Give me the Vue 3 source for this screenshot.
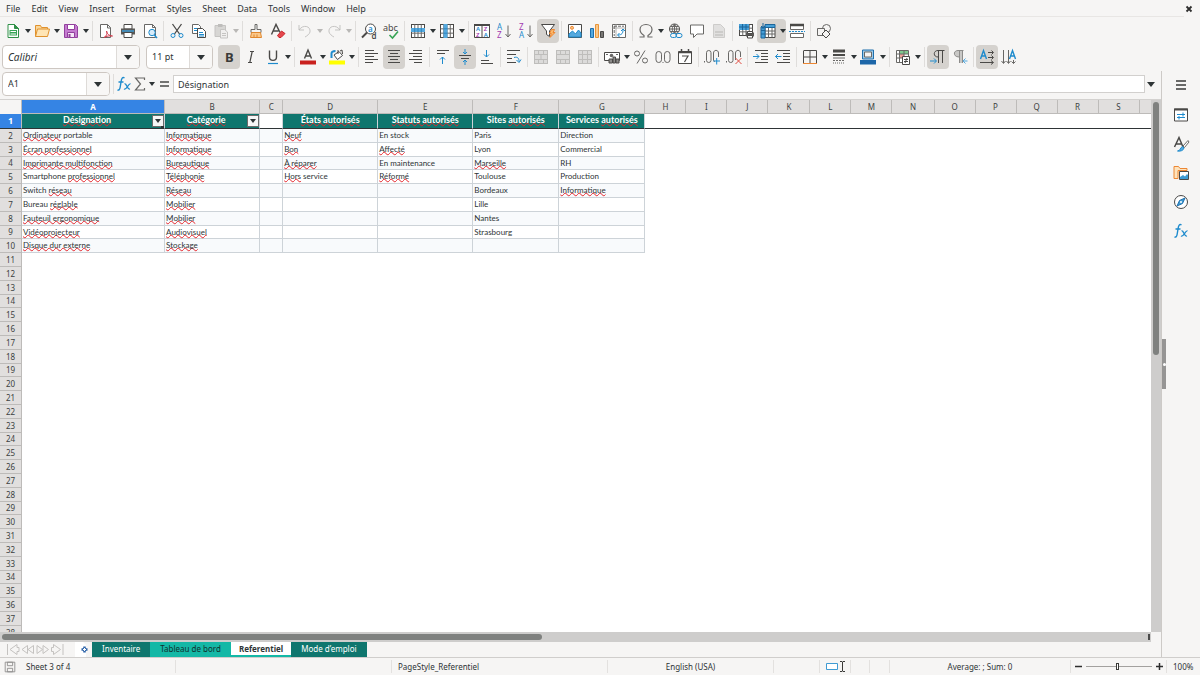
<script setup>
const menus = ['File', 'Edit', 'View', 'Insert', 'Format', 'Styles', 'Sheet', 'Data', 'Tools', 'Window', 'Help']

const G = '#696866'
const D = '#4a4947'
const B = '#1e8bcd'
const grid = (x, y, w, h) =>
  `<rect x="${x}" y="${y}" width="${w}" height="${h}" fill="#fff" stroke="${D}"/><path d="M${x} ${y + h / 3}h${w}M${x} ${y + (2 * h) / 3}h${w}M${x + w / 4} ${y}v${h}M${x + w / 2} ${y}v${h}M${x + (3 * w) / 4} ${y}v${h}" stroke="${G}"/>`
const lines = (rows) => `<path d="${rows.map(([x, y, w]) => `M${x} ${y}h${w}`).join('')}" stroke="${D}"/>`
const merge = (extra) =>
  `<rect x="1.5" y="1.5" width="13" height="13" fill="#d6d5d4" stroke="#b1b0ae"/><path d="M1 5.5h14M1 10.5h14M5.5 2v3.500M10.500 2v3.500M5.500 11v3.500M10.500 11v3.500${extra}" stroke="#b1b0ae"/>`

const icons = {
  new: `<path d="M3 1.500h6.500l4 4v9H3z" fill="#fff" stroke="#309048"/><path d="M9.500 1.500v4h4z" fill="#309048" stroke="#309048"/><path d="M4.500 7h7.500v5.500h-7.500z" fill="#37a455"/><path d="M5.500 8.500h5.500M5.500 11h5.500" stroke="#fff"/>`,
  open: `<path d="M1.500 13.500v-11h5l1 2h6v2" fill="#fad79b" stroke="#e0922e"/><path d="M1.500 13.500l2-7.500h12l-2 7.500z" fill="#ffe5b5" stroke="#e0922e"/>`,
  save: `<path d="M1.500 1.500h11l2 2v11h-13z" fill="#c57bd0" stroke="#92409d"/><path d="M4.500 1.500h7v5h-7z" fill="#fff" stroke="#92409d"/><path d="M4.500 9.500h7v5h-7z" fill="#f5e6f7" stroke="#92409d"/><path d="M6.500 11v3.500" stroke="#92409d" stroke-width="2"/>`,
  pdf: `<path d="M2.500 1.500h7l3 3v10h-10z" fill="#fff" stroke="${G}"/><path d="M9.500 1.500v3.500h3" stroke="${G}"/><path d="M6 14.500c3-1.500 3.500-5 2.500-6.500 0 2.500 3 5 6 5-3-.5-6 0-8.500 1.500z" fill="#fff" stroke="#d43a4c"/>`,
  print: `<path d="M4 1.500h8V6H4z" fill="#fff" stroke="${D}"/><path d="M1 5.500h14v6H1z" fill="#5a5957"/><path d="M2 8h12" stroke="#3f9bd3" stroke-width="1.500"/><path d="M4 9.500h8v5H4z" fill="#fff" stroke="${D}"/>`,
  preview: `<path d="M2.500 1.500h8l3 3v10h-11z" fill="#fff" stroke="${G}"/><path d="M10.500 1.500v3h3" stroke="${G}"/><circle cx="10" cy="9.500" r="3.200" fill="#d8ecfa" stroke="${B}"/><path d="M12.300 12l2.700 3" stroke="${B}" stroke-width="1.500"/>`,
  cut: `<path d="M3.500 1l7 10M12.500 1l-7 10" stroke="${D}" stroke-width="1.300"/><circle cx="4" cy="12.500" r="2" stroke="${B}"/><circle cx="12" cy="12.500" r="2" stroke="${B}"/>`,
  copy: `<path d="M1.500 1.500h6l2 2v7h-8z" fill="#fff" stroke="${G}"/><path d="M3 5.500h4M3 7.500h3" stroke="${B}"/><path d="M6.500 5.500h5l3 3v6h-8z" fill="#fff" stroke="${D}"/><path d="M8 9.500h4M8 11.500h5M8 13h5" stroke="${B}"/>`,
  paste: `<path d="M2 2.500h10.500v11H2z" fill="#d0cfcd" stroke="#b9b8b6"/><path d="M5 1h4.500v3H5z" fill="#b1b0ae"/><path d="M7.500 6.500h4l3 2.500v6h-7z" fill="#efeeed" stroke="#b9b8b6"/><path d="M9 10.500h4M9 12.500h4" stroke="#b9b8b6"/>`,
  brush: `<path d="M7 1.500h2v5h4v3H3v-3h4z" fill="#f5f5f4" stroke="${G}"/><path d="M3.500 9.500h9l1 5h-11z" fill="#fac88b" stroke="#e0872e"/><path d="M6 11.500v3M9 11.500v3" stroke="#e0872e"/>`,
  clear: `<path d="M1.500 11.500L6 1.500l4 8M3 8h5.500" stroke="${D}" stroke-width="1.400"/><path d="M7.500 12.500l4-4.500 3.500 2.500-4 4H9z" fill="#e5484d" stroke="#c9252b"/>`,
  undo: `<path d="M2 2v5h5M2 7c4-6 12-4 11 2-.5 2-3 4-5 5" stroke="#b9b8b6"/>`,
  redo: `<path d="M14 2v5H9M14 7C10 1 2 3 3 9c.5 2 3 4 5 5" stroke="#b9b8b6"/>`,
  find: `<circle cx="9.500" cy="6" r="5" fill="#fff" stroke="${D}"/><path d="M6 9.500L1 14.500" stroke="${D}" stroke-width="2"/><text x="7" y="8.500" font-size="8" font-weight="600" fill="${B}">a</text><text x="10.500" y="15.500" font-size="8" font-weight="600" fill="${D}">d</text>`,
  spell: `<text x="0" y="7.500" font-size="9" fill="${D}">abc</text><path d="M6.500 12l3 3 5.500-6.500" stroke="#37a455" stroke-width="1.600"/>`,
  row: grid(1.5, 1.5, 13, 13) + `<path d="M1 5h14v4H1z" fill="#55a9de"/><path d="M4.700 5v4M8 5v4M11.300 5v4" stroke="#2f86bf"/>`,
  col: grid(1.5, 1.5, 13, 13) + `<path d="M4.500 1h4v14h-4z" fill="#55a9de"/><path d="M4.500 5.800h4M4.500 10.200h4" stroke="#2f86bf"/>`,
  sort: `<path d="M.5 1.500h15v13H.5z" fill="#fff" stroke="${D}"/><path d="M0 2h16" stroke="${D}" stroke-width="2"/><path d="M8 2v12.500" stroke="${D}"/><g font-size="6" font-weight="600"><text x="2" y="8.300" fill="${B}">A</text><text x="2" y="14" fill="#a33ab0">Z</text><text x="9.700" y="8.300" fill="#a33ab0">Z</text><text x="9.700" y="14" fill="${B}">A</text></g>`,
  az: `<g font-size="8"><text x="1" y="7" fill="${B}">A</text><text x="1" y="15" fill="#a33ab0">Z</text></g><path d="M12 2.500v11M9.500 11l2.500 3 2.500-3" stroke="${G}"/>`,
  za: `<g font-size="8"><text x="1" y="7" fill="#a33ab0">Z</text><text x="1" y="15" fill="${B}">A</text></g><path d="M12 2.500v11M9.500 11l2.500 3 2.500-3" stroke="${G}"/>`,
  filter: `<path d="M1.500 1.500h13L9.500 8v5.500l-3-2V8z" fill="#fff" stroke="${D}"/><path d="M11.500 6.500h3l-1.500 3h2l-5 5 1.300-4H9.500z" fill="#fbb96c" stroke="#ed8733"/>`,
  image: `<path d="M1.500 1.500h13v13h-13z" fill="#fff" stroke="${D}"/><path d="M2 14v-3l3.500-3 3 3 3-4 2.500 3v4z" fill="#55a9de" stroke="${B}"/><circle cx="5" cy="4.800" r="1.500" fill="#fac88b" stroke="#ed8733"/>`,
  chart: `<path d="M1.500 5.500h3v9h-3z" fill="#55a9de" stroke="#1e6fad"/><path d="M6.500 1.500h3v13h-3z" fill="#fac88b" stroke="#e8953a"/><path d="M11.500 8.500h3v6h-3z" fill="#797774" stroke="${D}"/>`,
  pivot: `<path d="M1.500 1.500h13v13h-13z" fill="#fff" stroke="${G}"/><path d="M5 1.500v13M1.500 5h13" stroke="#b1b0ae"/><path d="M3.200 3v10M3 3.200h10" stroke="${G}" stroke-dasharray="3 1" /><path d="M7 12c4 0 5-2 5-5M10 8l2-2 2 2M8.500 10L6.500 12l2 2" stroke="${B}"/>`,
  omega: `<path d="M1.500 14h4.500v-1.500c-3-2-4-4-4-6C2 3.500 4.500 1.500 8 1.500s6 2 6 5c0 2-1 4-4 6V14h4.500" stroke="${G}" stroke-width="1.200"/>`,
  link: `<circle cx="7.500" cy="6" r="5" stroke="${D}"/><path d="M2.500 6h10M3.500 3.500h8M3.500 8.500h8M7.500 1v10M7.500 1c-3 3-3 7 0 10M7.500 1c3 3 3 7 0 10" stroke="${G}"/><rect x="3.500" y="10.500" width="6" height="4" rx="2" fill="#f5f4f3" stroke="${B}"/><rect x="9" y="10.500" width="6" height="4" rx="2" stroke="${B}"/>`,
  comment: `<path d="M1.500 2h13v9h-6.500L4.500 14.500V11h-3z" fill="#fff" stroke="${G}"/>`,
  header: `<path d="M2.500 1.500h7l4 4v9h-11z" fill="#dddcdb" stroke="#c3c2c0"/><path d="M4 9h8M4 12h8" stroke="#c3c2c0" stroke-width="2"/>`,
  printarea: grid(1.5, 1.5, 13, 11) + `<path d="M1 1h10v6H1z" fill="#469fd7"/><path d="M1 4h10M4.500 1v6M8 1v6" stroke="#1b659a"/><path d="M8 9.500h8v4H8z" fill="#5a5957"/><path d="M9.500 8.500h5v2h-5zM9.500 12.500h5v2.500h-5z" fill="#fff" stroke="${D}"/>`,
  freeze: `<path d="M5 4.500h10v10H5z" fill="#fff" stroke="${D}"/><path d="M5 8h10M5 11h10M8.500 4.500v10M12 4.500v10" stroke="${G}"/><path d="M1 4h4v11H1zM5 1.500h10v3H5z" fill="#469fd7" stroke="#1b659a"/><path d="M1 7.500h4M1 11h4M3 0v6M1 3l2 2 2-2" stroke="#1b659a"/>`,
  split: `<path d="M1.500 2.500v4h13v-4" stroke="${G}" fill="#fff"/><path d="M1 2h14" stroke="${D}" stroke-width="2.500"/><path d="M0 8.500h16" stroke="${B}" stroke-dasharray="2 1"/><path d="M1.500 10.500h13v4h-13z" fill="#fff" stroke="${G}"/>`,
  shapes: `<circle cx="10.500" cy="5.500" r="4" stroke="${G}"/><path d="M1.500 5.500h7v7h-7z" fill="#f5f4f3" stroke="${G}"/><path d="M10 7l4 4-4 4-4-4z" fill="#f5f4f3" stroke="${D}"/>`,
  bold: `<text x="4" y="13" font-size="13" font-weight="700" fill="#3a3a38">B</text>`,
  italic: `<path d="M7 2.500h4M5 13.500h4M9.200 2.500l-2.400 11" stroke="${D}" stroke-width="1.200"/>`,
  underline: `<path d="M4.500 1.500v6.500c0 4.500 7 4.500 7 0V1.500" stroke="${D}" stroke-width="1.400"/><path d="M3 14.500h10" stroke="${B}" stroke-width="1.200"/>`,
  color: `<path d="M4.500 9.500L8 1l3.500 8.500M5.500 7h5" stroke="${D}" stroke-width="1.400"/><path d="M0 11.500h16v4H0z" fill="#c9211e"/>`,
  highlight: `<path d="M5 6l5-3.500 3.500 4-5 4z" fill="#fff" stroke="${D}"/><path d="M9 1v4M11 2l2-1 .5 4" stroke="${D}"/><path d="M2.500 9V4.500c0-2 1-2.500 4-2.500" stroke="${B}" stroke-width="2"/><path d="M0 11.500h16v4H0z" fill="#ffff00"/>`,
  left: lines([[1, 1.5, 9], [1, 4.5, 13], [1, 7.5, 9], [1, 10.5, 13], [1, 13.5, 8]]),
  center: lines([[2, 1.5, 12], [4, 4.5, 8], [2, 7.5, 12], [4, 10.5, 8], [2, 13.5, 12]]),
  right: lines([[5, 1.5, 9], [1, 4.5, 13], [5, 7.5, 9], [1, 10.5, 13], [6, 13.5, 8]]),
  top: lines([[2, 1.5, 12], [2, 4.5, 8]]) + `<path d="M7.500 15V8M5 10.500L7.500 8l2.500 2.500" stroke="${B}"/>`,
  middle: lines([[2, 6.5, 12], [4, 9.5, 8]]) + `<path d="M8 0v5M6 3l2 2 2-2M8 16v-5M6 13l2-2 2 2" stroke="${B}"/>`,
  bottom: lines([[2, 11.5, 8], [2, 14.5, 12]]) + `<path d="M7.500 1v7M5 5.500L7.500 8l2.500-2.500" stroke="${B}"/>`,
  wrap: lines([[1, 1.5, 13], [1, 5.5, 9], [1, 9.5, 5], [1, 13.5, 9]]) + `<path d="M8 8.500c4-1 5 1 5 4M10.500 11l2.500 2.500 2-3" stroke="${B}"/>`,
  merge1: merge('M8 5.500v5'),
  merge2: merge(''),
  merge3: merge('M5.500 5v6M10.500 5v6'),
  money: `<path d="M.5 3.500h15v8H.5z" fill="#fff" stroke="${D}"/><circle cx="7.500" cy="6.500" r="1.800" fill="${G}"/><path d="M2 5.500h2M12 5.500h2" stroke="${G}"/><path d="M5 10h3.500v4H5zM9 8h2.500v6H9zM12 10h3v4h-3z" fill="#8d8c8a" stroke="${D}"/>`,
  percent: `<circle cx="4" cy="4.500" r="2.500" stroke="${G}"/><circle cx="12" cy="11.500" r="2.500" stroke="${G}"/><path d="M12 1.500L4 14.500" stroke="${G}"/>`,
  number: `<rect x="1" y="2.500" width="5.500" height="11" rx="2.700" stroke="${G}"/><rect x="9.500" y="2.500" width="5.500" height="11" rx="2.700" stroke="${G}"/><path d="M7.500 13h1v1h-1z" fill="${G}"/>`,
  date: `<path d="M1.500 2.500h13v12h-13z" fill="#fff" stroke="${D}"/><path d="M1.500 3.500h13M4.500 0v4M11.500 0v4" stroke="${D}" stroke-width="1.500"/><path d="M5 7h6l-3.500 6" stroke="${D}" stroke-width="1.200"/>`,
  decadd: `<path d="M0 12h1v1.500H0z" fill="${G}"/><rect x="2.500" y="1.500" width="4.500" height="12" rx="2.200" stroke="${G}"/><path d="M9.500 11V4c0-3.500 5-3.500 5 0v4M9.500 11l1 2" stroke="${G}"/><path d="M9.500 12h6.500M12.700 9v6.500" stroke="${B}"/>`,
  decdel: `<path d="M0 12h1v1.500H0z" fill="${G}"/><rect x="2.500" y="1.500" width="4.500" height="12" rx="2.200" stroke="${G}"/><path d="M9.500 11V4c0-3.500 5-3.500 5 0v4" stroke="${G}"/><path d="M9.500 9l6 6M15.500 9l-6 6" stroke="#e04a3f"/>`,
  indent: lines([[2, 1.5, 13], [8, 4.5, 7], [8, 7.5, 7], [8, 10.5, 7], [2, 13.5, 13]]) + `<path d="M0 7.500h6M3.500 5L6 7.500 3.500 10" stroke="${B}"/>`,
  outdent: lines([[2, 1.5, 13], [8, 4.5, 7], [8, 7.5, 7], [8, 10.5, 7], [2, 13.5, 13]]) + `<path d="M.5 7.500h6M3 5L.5 7.500 3 10" stroke="${B}"/>`,
  border: `<path d="M1.500 2v12.500M1.500 1.500h13v13M8 2v12.500M1.500 8h13" stroke="${D}"/><path d="M1 14.500h14" stroke="#ed8733"/>`,
  style: `<path d="M2 2h12" stroke="${D}" stroke-width="3"/><path d="M2 6h12" stroke="${D}" stroke-width="2"/><path d="M2 9h12" stroke="${G}"/><path d="M2 11.500h12" stroke="${G}" stroke-dasharray="2 1"/><path d="M2 14h12" stroke="${G}" stroke-dasharray="1 1"/>`,
  bcolor: `<path d="M2.500 1h11v9h-11z" fill="#9dcbea" stroke="#1e6fad"/><path d="M4.500 3h7v5h-7z" fill="#f5f4f3" stroke="${G}"/><path d="M0 11h16v4.500H0z" fill="#1d66a8"/>`,
  cond: `<path d="M1.500 1.500h12v12h-12z" fill="#fff" stroke="${G}"/><path d="M4 2h9v3H4z" fill="#7fc98f"/><path d="M4 5h5v4H4z" fill="#f0a09a"/><path d="M1.500 5h12M1.500 9h12M4.500 1.500v12M9 1.500v6" stroke="${G}"/><path d="M7.500 7.500h7v8h-7z" fill="#fff" stroke="${D}"/><path d="M9 10.500h4M9 12.500h4M12 9l-2 5" stroke="${D}"/>`,
  ltr: `<path d="M8.500 14V1.500M12.500 14V1.500M14.500 1.500H8c-5 0-5 6.500 0 6.500" stroke="${D}"/><path d="M0 12h6M4 9.500L6.500 12 4 14.500" stroke="${B}"/>`,
  rtl: `<path d="M6 1.500h4.500V14h-3V8H7c-6 0-6-6.500-1-6.500z" fill="#c9c8c6"/><path d="M7.500 14V1.500M10.500 14V1.500M11.500 1.500H6c-5 0-5 6.500 1 6.500" stroke="#8d8c8a"/><path d="M15.500 12h-4M13.500 9.500L11 12l2.500 2.500" stroke="#55a9de"/>`,
  horiz: `<path d="M1.500 10l3-8.500 3 8.500M2.500 7h4" stroke="${B}" stroke-width="1.400"/><path d="M9 3.500h5M12.500 1.500l2 2-2 2M9 8.500h5M12.500 6.500l2 2-2 2M1 13.500h13M12 11.500l2.500 2-2.500 2" stroke="${D}"/>`,
  vert: `<path d="M8.500 10l3-8.500 3 8.500M9.500 7h4" stroke="${B}" stroke-width="1.400"/><path d="M2.500 1v13M.5 12l2 2.500 2-2.500M7.500 1v13M5.500 12l2 2.500 2-2.500M12.500 11v3.500M10.500 12.500l2 2 2-2" stroke="${G}"/>`,
  fx: `<path d="M8.500 2c-2-1.300-3 .5-3.400 3.500l-1 6c-.3 2-1.300 3-2.600 2.300M2.500 6h5" stroke="${B}" stroke-width="1.400"/><path d="M8.500 8c2-1.300 2.500 6 5.500 5M14.500 8c-2-1-4 6.500-6.500 5" stroke="${B}" stroke-width="1.300"/>`,
  sum: `<path d="M12.500 4V2h-9l5 6-5 6h9v-2" stroke="${G}" stroke-width="1.200"/>`,
  equal: `<path d="M4 6h9M4 10h9" stroke="${D}" stroke-width="1.700"/>`,
  menu: `<path d="M3 4h10M3 8h10M3 12h10" stroke="#3a3a38" stroke-width="1.500"/>`,
  props: `<path d="M1.500 2h13v12h-13z" fill="#fff" stroke="${D}"/><path d="M1 2.500h14" stroke="${D}" stroke-width="2"/><path d="M4 7.500h8M10 5.500v4M4 10.500h8M6 9v3.500" stroke="${B}"/>`,
  styles: `<path d="M1.500 11L6 1.500l4 9.500M3 8h6" stroke="${D}" stroke-width="1.500"/><path d="M15 4.500L10 10l1.500 1.500L16 6z" fill="#fff" stroke="${G}"/><path d="M4.500 15c3 0 2.500-3.500 5-4.500l1.500 1.500c-.5 2.500-3.500 3.500-6.500 3z" fill="#55a9de" stroke="${B}"/>`,
  gallery: `<path d="M1 13.500V1.500h4.500l1.500 2h7v2M1 13.500h4v-8h9" fill="#fde3bd" stroke="#ed8733"/><path d="M6.500 6.500h9v8h-9z" fill="#fff" stroke="${D}"/><path d="M7 14v-2l3-2 2 1.500L14 9l1 1v4z" fill="#3f9bd3"/>`,
  navigator: `<circle cx="8" cy="8" r="6.500" fill="#fff" stroke="${D}"/><path d="M12 4L9.500 9.500 4 12l2.500-5.500z" fill="#3f9bd3" stroke="#1e6fad"/><circle cx="8" cy="8" r="1" fill="#fff"/>`,
  disk: `<path d="M2.500 2.500h11v11h-11z" stroke="#8d8c8a"/><path d="M5 2.500h6v4H5zM5 9.500h6v4H5z" stroke="#8d8c8a"/>`,
}

const sep = { sep: true }
const standardBar = [
  { icon: 'new', label: 'New', drop: true }, { icon: 'open', label: 'Open', drop: true }, { icon: 'save', label: 'Save', drop: true }, sep,
  { icon: 'pdf', label: 'Export as PDF' }, { icon: 'print', label: 'Print' }, { icon: 'preview', label: 'Print Preview' }, sep,
  { icon: 'cut', label: 'Cut' }, { icon: 'copy', label: 'Copy' }, { icon: 'paste', label: 'Paste', drop: true, off: true }, sep,
  { icon: 'brush', label: 'Clone Formatting' }, { icon: 'clear', label: 'Clear Formatting' }, sep,
  { icon: 'undo', label: 'Undo', drop: true, off: true }, { icon: 'redo', label: 'Redo', drop: true, off: true }, sep,
  { icon: 'find', label: 'Find and Replace' }, { icon: 'spell', label: 'Spelling' }, sep,
  { icon: 'row', label: 'Row', drop: true }, { icon: 'col', label: 'Column', drop: true }, sep,
  { icon: 'sort', label: 'Sort' }, { icon: 'az', label: 'Sort Ascending' }, { icon: 'za', label: 'Sort Descending' }, { icon: 'filter', label: 'AutoFilter', on: true }, sep,
  { icon: 'image', label: 'Insert Image' }, { icon: 'chart', label: 'Insert Chart' }, { icon: 'pivot', label: 'Pivot Table' }, sep,
  { icon: 'omega', label: 'Special Character', drop: true }, { icon: 'link', label: 'Hyperlink' }, { icon: 'comment', label: 'Comment' }, { icon: 'header', label: 'Headers and Footers', off: true }, sep,
  { icon: 'printarea', label: 'Print Area' }, { icon: 'freeze', label: 'Freeze Rows and Columns', drop: true, on: true }, { icon: 'split', label: 'Split Window' }, sep,
  { icon: 'shapes', label: 'Draw Functions' },
]
const formatBar = [
  { icon: 'bold', label: 'Bold', on: true }, { icon: 'italic', label: 'Italic' }, { icon: 'underline', label: 'Underline', drop: true }, sep,
  { icon: 'color', label: 'Font Color', drop: true }, { icon: 'highlight', label: 'Background Color', drop: true }, sep,
  { icon: 'left', label: 'Align Left' }, { icon: 'center', label: 'Center Horizontally', on: true }, { icon: 'right', label: 'Align Right' }, sep,
  { icon: 'top', label: 'Align Top' }, { icon: 'middle', label: 'Center Vertically', on: true }, { icon: 'bottom', label: 'Align Bottom' }, sep,
  { icon: 'wrap', label: 'Wrap Text' }, sep,
  { icon: 'merge1', label: 'Merge and Center', off: true }, { icon: 'merge2', label: 'Merge Cells', off: true }, { icon: 'merge3', label: 'Unmerge Cells', off: true }, sep,
  { icon: 'money', label: 'Currency', drop: true }, { icon: 'percent', label: 'Percent' }, { icon: 'number', label: 'Number' }, { icon: 'date', label: 'Date' }, sep,
  { icon: 'decadd', label: 'Add Decimal Place' }, { icon: 'decdel', label: 'Delete Decimal Place' }, sep,
  { icon: 'indent', label: 'Increase Indent' }, { icon: 'outdent', label: 'Decrease Indent' }, sep,
  { icon: 'border', label: 'Borders', drop: true }, { icon: 'style', label: 'Border Style', drop: true }, { icon: 'bcolor', label: 'Border Color', drop: true }, sep,
  { icon: 'cond', label: 'Conditional Formatting', drop: true }, sep,
  { icon: 'ltr', label: 'Left-To-Right', on: true }, { icon: 'rtl', label: 'Right-To-Left' }, sep,
  { icon: 'horiz', label: 'Text direction from left to right', on: true }, { icon: 'vert', label: 'Text direction from top to bottom' },
]
const bars = [standardBar, formatBar]
const sidebar = [
  { icon: 'menu', label: 'Sidebar Settings' }, { icon: 'props', label: 'Properties' }, { icon: 'styles', label: 'Styles' },
  { icon: 'gallery', label: 'Gallery' }, { icon: 'navigator', label: 'Navigator' }, { icon: 'fx', label: 'Functions' },
]

const letters = 'ABCDEFGHIJKLMNOPQRSTUVWXYZ'.split('')
const ROWS = 80

/* Underscores mark the words that the spelling checker underlines. */
const headings = ['_Désignation_', '_Catégorie_', '', '_États autorisés_', '_Statuts autorisés_', 'Sites _autorisés_', 'Services _autorisés_']
const records = [
  ['_Ordinateur_ portable', '_Informatique_', '', '_Neuf_', 'En stock', 'Paris', 'Direction'],
  ['_Écran professionnel_', '_Informatique_', '', '_Bon_', '_Affecté_', 'Lyon', 'Commercial'],
  ['_Imprimante multifonction_', '_Bureautique_', '', '_À réparer_', 'En maintenance', '_Marseille_', 'RH'],
  ['Smartphone _professionnel_', '_Téléphonie_', '', '_Hors_ service', '_Réformé_', 'Toulouse', 'Production'],
  ['Switch _réseau_', '_Réseau_', '', '', '', 'Bordeaux', '_Informatique_'],
  ['Bureau _réglable_', '_Mobilier_', '', '', '', 'Lille', ''],
  ['_Fauteuil ergonomique_', '_Mobilier_', '', '', '', 'Nantes', ''],
  ['_Vidéoprojecteur_', '_Audiovisuel_', '', '', '', 'Strasbourg', ''],
  ['_Disque dur externe_', '_Stockage_', '', '', '', '', ''],
]
const parts = (s) => s.split('_').map((text, i) => ({ text, bad: i % 2 === 1 })).filter((p) => p.text)

const sheets = [
  { name: 'Inventaire', cls: 'dark' },
  { name: 'Tableau de bord', cls: 'teal' },
  { name: 'Referentiel', cls: 'current' },
  { name: 'Mode d’emploi', cls: 'dark' },
]
const navs = [
  { label: 'First sheet', d: 'M2.500 2v11M12 2.500L5 7.500l7 5V9.500h2v-4h-2z' },
  { label: 'Previous sheet', d: 'M7.500 3.500L2 7.500l5.500 4zM13.500 3.500L8 7.500l5.500 4z' },
  { label: 'Next sheet', d: 'M2 3.500l5.500 4-5.500 4zM8 3.500l5.500 4-5.500 4z' },
  { label: 'Last sheet', d: 'M13 2v11M3.500 2.500l7 5-7 5V9.500h-2v-4h2z' },
]
</script>

<template>
  <div class="app">
    <header class="menubar">
      <nav>
        <button v-for="m in menus" :key="m">{{ m }}</button>
      </nav>
      <button class="close" aria-label="Close document">
        <svg width="8" height="8" viewBox="0 0 8 8"><path d="M1.500 1.500l5 5M6.500 1.500l-5 5" stroke="#2e2e2e" stroke-width="1.800" /></svg>
      </button>
    </header>

    <div v-for="(bar, b) in bars" :key="b" class="toolbar" role="toolbar">
      <template v-if="b === 1">
        <div class="combo font">
          <input aria-label="Font Name" value="Calibri" class="slanted" /><button aria-label="Font list"><i class="tri" /></button>
        </div>
        <div class="combo size">
          <input aria-label="Font Size" value="11 pt" /><button aria-label="Size list"><i class="tri" /></button>
        </div>
      </template>
      <template v-for="(t, i) in bar" :key="i">
        <span v-if="t.sep" class="sep" />
        <span v-else class="tool" :class="{ on: t.on, off: t.off, split: t.drop }">
          <button class="act" :aria-label="t.label"><svg class="ic" viewBox="0 0 16 16" v-html="icons[t.icon]" /></button>
          <button v-if="t.drop" class="drop" :aria-label="t.label + ' options'"><i class="tri small" /></button>
        </span>
      </template>
    </div>

    <div class="workspace">
      <main>
        <div class="formula">
          <div class="combo name">
            <input aria-label="Name Box" value="A1" /><button aria-label="Name list"><i class="tri" /></button>
          </div>
          <span class="sep" />
          <button class="fbtn" aria-label="Function Wizard"><svg class="ic" viewBox="0 0 16 16" v-html="icons.fx" /></button>
          <button class="fbtn" aria-label="Select Function"><svg class="ic" viewBox="0 0 16 16" v-html="icons.sum" /></button>
          <button class="drop" aria-label="Function list"><i class="tri small" /></button>
          <button class="fbtn" aria-label="Formula"><svg class="ic" viewBox="0 0 16 16" v-html="icons.equal" /></button>
          <input class="line" aria-label="Input line" value="Désignation" />
          <button class="expand" aria-label="Expand Formula Bar"><i class="tri" /></button>
        </div>

        <div class="sheetarea">
          <div class="sheet">
            <table>
              <colgroup>
                <col class="w-num" />
                <col v-for="l in letters" :key="l" :class="'w-' + l" />
              </colgroup>
              <thead>
                <tr>
                  <td class="corner"></td>
                  <th v-for="l in letters" :key="l" scope="col" :class="{ sel: l === 'A' }">{{ l }}</th>
                </tr>
              </thead>
              <tbody>
                <tr class="headings">
                  <th scope="row" class="sel">1</th>
                  <td v-for="(h, c) in headings" :key="c" :class="{ fill: h, pick: c < 2, cursor: c === 0 }">
                    <span v-for="(p, k) in parts(h)" :key="k" :class="{ bad: p.bad }">{{ p.text }}</span>
                    <button v-if="c < 2" class="auto" :aria-label="'Filter column ' + letters[c]"><i class="tri small" /></button>
                  </td>
                  <td class="void" colspan="19"></td>
                </tr>
                <tr v-for="(r, n) in records" :key="n" class="record">
                  <th scope="row">{{ n + 2 }}</th>
                  <td v-for="(v, c) in r" :key="c"><span v-for="(p, k) in parts(v)" :key="k" :class="{ bad: p.bad }">{{ p.text }}</span></td>
                  <td class="void" colspan="19"></td>
                </tr>
                <tr v-for="n in ROWS" :key="'e' + n">
                  <th scope="row">{{ n + 10 }}</th>
                  <td class="void" colspan="26"></td>
                </tr>
              </tbody>
            </table>
          </div>
          <div class="vscroll"><span /></div>
        </div>

        <div class="hrow"><div class="hscroll"><span class="thumb" /><span class="end" /></div></div>

        <div class="tabs">
          <div class="navs">
            <button v-for="n in navs" :key="n.label" :aria-label="n.label" disabled>
              <svg width="15" height="15" viewBox="0 0 15 15"><path :d="n.d" fill="none" stroke="#c4c2c0" /></svg>
            </button>
          </div>
          <button class="add" aria-label="Add sheet">
            <svg width="13" height="15" viewBox="0 0 13 15"><path d="M0 0h8l3 3v12H0z" fill="#fff" /><path d="M9.500 4.500v6M6.500 7.500h6" stroke="#2b62a8" stroke-width="2.500" /><path d="M9.500 6v3M8 7.500h3" stroke="#fff" /></svg>
          </button>
          <button v-for="s in sheets" :key="s.name" class="tab" :class="s.cls">{{ s.name }}</button>
        </div>
      </main>

      <aside>
        <button v-for="s in sidebar" :key="s.icon" :aria-label="s.label"><svg class="ic" viewBox="0 0 16 16" v-html="icons[s.icon]" /></button>
        <span class="handle"><i /></span>
      </aside>
    </div>

    <footer>
      <span class="mid"><svg width="14" height="14" viewBox="0 0 16 16" fill="none" v-html="icons.disk" /></span>
      <span>Sheet 3 of 4</span>
      <span></span>
      <span>PageStyle_Referentiel</span>
      <span class="mid">English (USA)</span>
      <span></span>
      <span class="mode">
        <svg width="22" height="13" viewBox="0 0 22 13" fill="none"><path d="M1.500 3.500h11v6h-11z" fill="#fff" stroke="#3f9bd3" /><path d="M15 1.500h2l.5.500.5-.500h2M17.500 2v9M15 11.500h2l.5-.500.5.500h2" stroke="#3a3a38" /></svg>
      </span>
      <span></span>
      <span></span>
      <span class="mid">Average: ; Sum: 0</span>
      <span class="zoom">
        <button aria-label="Zoom Out"><svg width="7" height="7" viewBox="0 0 7 7"><path d="M0 3.500h7" stroke="#2e2e2e" stroke-width="1.500" /></svg></button>
        <input type="range" aria-label="Zoom" min="0" max="100" value="49" />
        <button aria-label="Zoom In"><svg width="7" height="7" viewBox="0 0 7 7"><path d="M0 3.500h7M3.500 0v7" stroke="#2e2e2e" stroke-width="1.500" /></svg></button>
      </span>
      <span>100%</span>
    </footer>
  </div>
</template>

<style>
body {
  margin: 0;
  background: #f6f5f4;
}
</style>

<style scoped>
.app {
  display: flex;
  flex-direction: column;
  height: 100vh;
  overflow: hidden;
  background: #f6f5f4;
  color: #2e3436;
  font: 9px/12px "Noto Sans", sans-serif;
}
* {
  box-sizing: border-box;
}
button,
input {
  margin: 0;
  padding: 0;
  border: 0;
  background: none;
  color: inherit;
  font: inherit;
  min-width: 0;
}
button {
  display: inline-flex;
  align-items: center;
  justify-content: center;
}
.ic {
  width: 16px;
  height: 16px;
  fill: none;
  flex: none;
  overflow: visible;
}
.off .ic {
  opacity: 0.8;
}
.tri {
  border: 4px solid transparent;
  border-top: 5px solid #2e3436;
  border-bottom: 0;
}
.tri.small {
  border-width: 4px 3px 0;
}
.off .tri {
  border-top-color: #b9b8b6;
}

.menubar {
  display: flex;
  justify-content: space-between;
  height: 17px;
  flex: none;
  padding-right: 6px;
}
.menubar nav {
  display: flex;
  flex: 1;
  gap: 11px;
  padding: 2px 0 0 6px;
  border-bottom: 1px solid #e8e6e4;
}
.close {
  width: 10px;
}

.toolbar {
  display: flex;
  align-items: center;
  flex: none;
  height: 26px;
  padding: 2px 0 0 2px;
}
.toolbar + .toolbar {
  height: 28px;
  padding-bottom: 2px;
}
.tool {
  display: flex;
  height: 24px;
  border-radius: 4px;
}
.tool.on {
  background: #d5d2ce;
}
.act {
  width: 22px;
}
.drop {
  width: 7px;
}
.sep {
  width: 5px;
  height: 20px;
  flex: none;
  background: linear-gradient(#dfdddb, #dfdddb) center / 1px 100% no-repeat;
}
.split + .sep {
  width: 6px;
}
.combo {
  display: flex;
  flex: none;
  height: 24px;
  border: 1px solid #cdc7c2;
  border-radius: 4px;
  background: #fff;
  overflow: hidden;
}
.combo input {
  flex: 1;
  padding-left: 5px;
}
.combo button {
  width: 23px;
  border-left: 1px solid #dedbd8;
  background: #f8f7f6;
}
.combo .slanted {
  font-size: 10px;
  font-style: italic;
}
.font {
  width: 138px;
}
.size {
  width: 67px;
  margin: 0 5px 0 6px;
}

.workspace {
  display: flex;
  flex: 1;
  min-height: 0;
}
main {
  display: flex;
  flex-direction: column;
  flex: 1;
  min-width: 0;
}
.formula {
  display: flex;
  align-items: center;
  flex: none;
  height: 29px;
  padding: 0 4px 2px 2px;
  border-bottom: 1px solid #d3d1cf;
}
.name {
  width: 108px;
  margin-right: 1px;
}
.fbtn {
  width: 16px;
  height: 20px;
}
.formula .drop {
  width: 8px;
}
.line {
  flex: 1;
  height: 18px;
  margin-left: 1px;
  padding-left: 4px;
  border: 1px solid #d2d0ce;
  background: #fff;
}
.expand {
  width: 12px;
  height: 20px;
}

.sheetarea {
  display: flex;
  flex: 1;
  min-height: 0;
}
.sheet {
  flex: 1;
  min-width: 0;
  overflow: hidden;
  background: #fff;
}
table {
  width: 1427px;
  table-layout: fixed;
  border-spacing: 0;
  font: 8px/12px Lato, sans-serif;
}
col {
  width: 41px;
}
.w-num {
  width: 22px;
}
.w-A {
  width: 143px;
}
.w-B,
.w-D,
.w-E {
  width: 95px;
}
.w-C {
  width: 23px;
}
.w-F,
.w-G {
  width: 86px;
}
.w-K,
.w-N {
  width: 42px;
}
th,
td {
  height: 14px;
  padding: 0 1px;
  text-align: left;
  vertical-align: top;
  white-space: nowrap;
}
th {
  padding: 0;
  background: #e1dfde;
  border: 0 solid #bdbbb9;
  border-width: 0 1px 1px 0;
  color: #3c3f41;
  font: 8px/12px "Noto Sans", sans-serif;
  text-align: center;
  vertical-align: middle;
}
thead td {
  border-right: 1px solid #bdbbb9;
  background: #f6f5f4;
}
th.sel {
  background: #3584e4;
  color: #fff;
  font-weight: 700;
}
tbody tr:nth-child(5n + 4) > * {
  height: 13px;
}
.headings > * {
  height: 15px;
  border-bottom: 1px solid #2e3436;
  font-size: 9px;
  text-align: center;
}
.headings td:not(.void),
.record td:not(.void) {
  border-right: 1px solid #cdd3d8;
}
.record td:not(.void) {
  border-bottom: 1px solid #cdd3d8;
}
.record:nth-child(even) td:not(.void) {
  background: #f8fafc;
}
.headings .fill {
  position: relative;
  background: #0f766e;
  color: #fff;
  font-weight: 700;
}
.headings .pick {
  padding-right: 13px;
}
.bad {
  text-decoration: underline wavy #e5262c 1px;
  text-decoration-skip-ink: none;
  text-underline-offset: -1px;
}
.cursor::after {
  content: "";
  position: absolute;
  right: 0;
  bottom: 0;
  width: 3px;
  height: 2px;
  background: #2e3436;
}
.auto {
  position: absolute;
  top: 1px;
  right: 0;
  width: 12px;
  height: 12px;
  border: 1px solid #6a6a6a;
  background: #f6f6f6;
}

.vscroll {
  width: 10px;
  flex: none;
  padding: 2px;
  background: #cecdcc;
}
.vscroll span {
  display: block;
  height: 48%;
  border-radius: 3px;
  background: #7f817f;
}
.hrow {
  flex: none;
  padding-right: 10px;
}
.hscroll {
  display: flex;
  justify-content: space-between;
  height: 10px;
  padding: 2px 1px 2px 2px;
  background: #cecdcc;
}
.thumb {
  width: 47%;
  border-radius: 3px;
  background: #7f817f;
}
.end {
  width: 2px;
  background: #4a4a4a;
}

.tabs {
  display: flex;
  flex: none;
  height: 15px;
  font-size: 8px;
}
.navs {
  display: flex;
  width: 75px;
  padding-left: 5px;
}
.add {
  width: 13px;
  margin-right: 4px;
}
.tab {
  padding: 0 10px 1px;
}
.tab.dark {
  background: #0f766e;
  color: #fff;
}
.tab.teal {
  background: #14b8a6;
  color: #10302d;
}
.tab.current {
  padding: 0 8px;
  border-bottom: 2px solid #14b8a6;
  background: #fff;
  font-weight: 700;
}

aside {
  position: relative;
  display: flex;
  flex-direction: column;
  align-items: center;
  width: 39px;
  flex: none;
  border-left: 1px solid #cdcac7;
}
aside button {
  width: 24px;
  height: 29px;
}
aside button:first-child {
  padding-bottom: 2px;
}
.handle {
  position: absolute;
  left: 0;
  top: 50%;
  display: flex;
  align-items: center;
  justify-content: center;
  width: 4px;
  height: 50px;
  margin-top: -25px;
  background: #969594;
}
.handle i {
  width: 3px;
  height: 3px;
  border-radius: 50%;
  background: #fff;
}

footer {
  display: grid;
  grid-template-columns: 20px 156fr 216fr 216fr 166fr 46px 31px 19px 20px 181fr 96px 33px;
  align-items: center;
  flex: none;
  height: 18px;
  border-top: 1px solid #d0cecc;
  font-size: 8px;
}
footer > span {
  display: flex;
  align-items: center;
  height: 13px;
  padding-left: 6px;
  border-right: 1px solid #e3e1df;
  white-space: nowrap;
}
footer > span:first-child,
footer > span:last-child {
  border-right: 0;
}
footer > .mid {
  justify-content: center;
  padding-left: 0;
}
footer .zoom {
  justify-content: center;
  gap: 4px;
  padding-left: 0;
}
footer .mode {
  padding-left: 5px;
}
.zoom input {
  appearance: none;
  width: 66px;
  height: 9px;
  background: linear-gradient(#a3a19f, #a3a19f) center / 100% 1px no-repeat;
}
.zoom input::-webkit-slider-thumb {
  appearance: none;
  width: 3px;
  height: 7px;
  border: 1px solid #3a3a38;
  background: #fff;
}
</style>
